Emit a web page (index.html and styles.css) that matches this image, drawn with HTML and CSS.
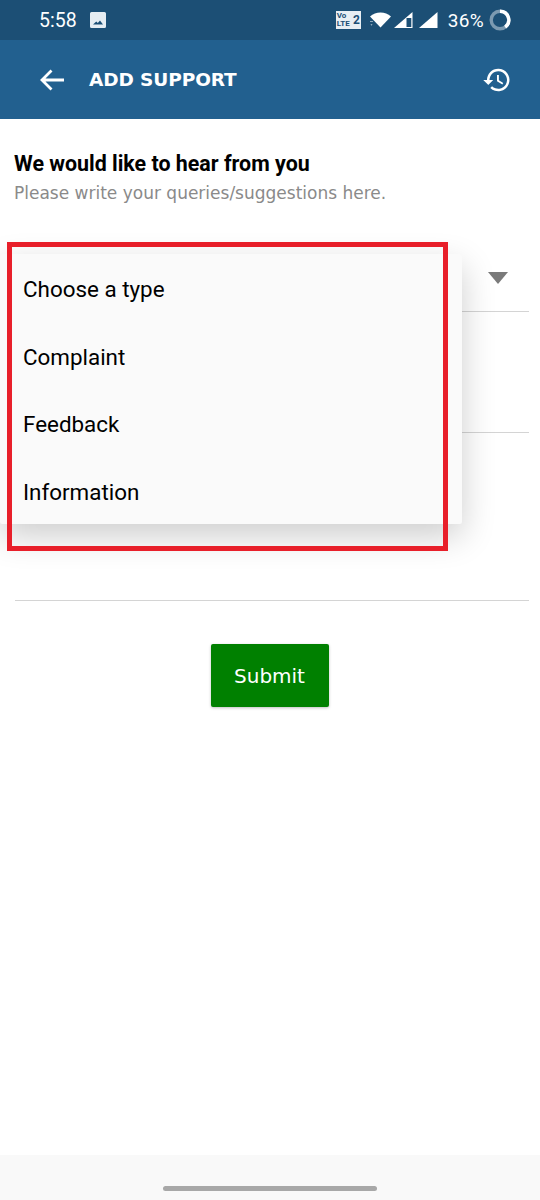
FILE: index.html
```html
<!DOCTYPE html>
<html lang="en">
<head>
  <meta charset="UTF-8" />
  <meta name="viewport" content="width=device-width, initial-scale=1" />
  <title>Add Support</title>
  <link rel="stylesheet" href="styles.css">
</head>
<body>
  <div class="status-bar">
    <span class="time">5:58</span>
    <svg class="gallery-icon" width="16" height="16" viewBox="0 0 16 16">
      <path fill="#e6edf2" fill-rule="evenodd" d="M1.500 0h13A1.500 1.500 0 0 1 16 1.500v13a1.500 1.500 0 0 1-1.500 1.500h-13A1.500 1.500 0 0 1 0 14.500v-13A1.500 1.500 0 0 1 1.500 0zM3 12.500h10L10 8.500l-2.200 2.500-1.500-1.600z"/>
    </svg>
    <div class="status-right">
      <div class="volte"><span class="volte-text">Vo<br>LTE</span><span class="volte-num">2</span></div>
      <svg class="wifi" width="22" height="18" viewBox="0 0 22 18">
        <path fill="#fff" d="M1 5.500C4 2.800 7.500 1.500 11.500 1.500s7.500 1.300 10.500 4l-10.500 11z"/>
        <path fill="#8fa9bd" d="M1 10h3v1H1zM1.500 13h2l-1 2z"/>
      </svg>
      <svg width="19" height="18" viewBox="0 0 19 18">
        <path fill="#fff" d="M0 17L18.500 1v16z"/>
        <path fill="#1c4f75" d="M12.500 7H17.300v9h-4.800z"/>
      </svg>
      <svg class="signal" width="19" height="18" viewBox="0 0 19 18">
        <path fill="#fff" d="M0 17L18.500 1v16z"/>
      </svg>
      <span class="battery-text">36%</span>
      <svg width="22" height="22" viewBox="0 0 22 22">
        <circle cx="11" cy="11" r="8.800" fill="none" stroke="#7c9ab1" stroke-width="3.400"/>
        <path d="M11 2.200A8.800 8.800 0 0 1 16.200 18.100" fill="none" stroke="#fff" stroke-width="3.400"/>
      </svg>
    </div>
  </div>

  <header class="app-bar">
    <svg class="back" width="24" height="24" viewBox="0 0 24 24">
      <path fill="none" stroke="#fff" stroke-width="2.800" d="M24 12H3M11.500 2.500L2 12l9.500 9.500"/>
    </svg>
    <h1>ADD SUPPORT</h1>
    <svg class="history" width="30" height="30" viewBox="0 0 24 24">
      <path fill="#fff" d="M13 3a9 9 0 0 0-9 9H1l3.890 3.890.07.140L9 12H6a7 7 0 1 1 2.050 4.950l-1.420 1.420A9 9 0 1 0 13 3zm-1 5v5l4.280 2.540.72-1.210-3.500-2.080V8z"/>
    </svg>
  </header>

  <main class="content">
    <h2>We would like to hear from you</h2>
    <p class="subtitle">Please write your queries/suggestions here.</p>

    <div class="field field-select">
      <span class="caret"></span>
    </div>
    <div class="field field-subject"></div>
    <div class="field field-message"></div>

    <button class="submit" type="button">Submit</button>

    <ul class="dropdown">
      <li>Choose a type</li>
      <li>Complaint</li>
      <li>Feedback</li>
      <li>Information</li>
    </ul>
    <div class="highlight"></div>
  </main>

  <div class="nav-bar"><span class="nav-pill"></span></div>
</body>
</html>
```

FILE: styles.css
```css
* { box-sizing: border-box; }

html, body { height: 100%; }

body {
  margin: 0;
  width: 540px;
  height: 1200px;
  display: flex;
  flex-direction: column;
  overflow: hidden;
  background: #fff;
  font-family: 'Roboto', sans-serif;
  color: #000;
}

.status-bar {
  height: 40px;
  flex: none;
  display: flex;
  align-items: center;
  padding: 0 29px 0 39px;
  background: #1c4f75;
  color: #fff;
}

.time { font-size: 19.500px; }

.gallery-icon { margin-left: 13px; }

.status-right {
  margin-left: auto;
  display: flex;
  align-items: center;
}

.volte {
  width: 25px;
  height: 18px;
  display: flex;
  align-items: center;
  justify-content: space-between;
  padding: 0 1px;
  margin-right: 8px;
  background: #e8eef3;
  color: #1c4f75;
  font-weight: 700;
}

.volte-text { font-size: 8px; line-height: 8px; }
.volte-num { font-size: 12px; }

.wifi { margin-right: 3px; }
.signal { margin-left: 6px; }

.battery-text {
  margin: 0 5px 0 10px;
  font-size: 19px;
  letter-spacing: 0.300px;
}

.app-bar {
  height: 79px;
  flex: none;
  display: flex;
  align-items: center;
  padding: 0 28px 0 40px;
  background: #22608f;
  color: #fff;
}

.app-bar h1 {
  margin: 0 0 0 25px;
  font-family: 'DejaVu Sans', sans-serif;
  font-size: 18.500px;
  font-weight: 700;
  letter-spacing: -0.100px;
}

.history { margin-left: auto; }

.content {
  flex: 1;
  position: relative;
  padding: 32.500px 11px 0 14px;
}

.content h2 {
  margin: 0;
  font-size: 21.400px;
  line-height: 24px;
  font-weight: 700;
}

.subtitle {
  margin: 7.500px 0 0;
  font-family: 'DejaVu Sans', sans-serif;
  font-size: 17px;
  line-height: 20px;
  color: #8a8a8a;
}

.field {
  margin-left: 1px;
  border-bottom: 1px solid #d4d4d4;
}

.field-select {
  height: 109px;
  position: relative;
}

.field-subject { height: 121px; }
.field-message { height: 168px; margin-right: 0; }

.caret {
  position: absolute;
  top: 69px;
  right: 21px;
  border-left: 10px solid transparent;
  border-right: 10px solid transparent;
  border-top: 12px solid #7a7a7a;
}

.submit {
  display: block;
  width: 118px;
  height: 63px;
  margin: 43px auto 0;
  position: relative;
  left: -2px;
  border: 0;
  border-radius: 2px;
  background: #008000;
  color: #fff;
  font-family: 'DejaVu Sans', sans-serif;
  font-size: 20px;
  font-weight: 400;
  box-shadow: 0 1px 3px rgba(0, 0, 0, 0.25);
}

.dropdown {
  position: absolute;
  top: 135px;
  left: 0;
  width: 462px;
  height: 270px;
  margin: 0;
  padding: 1.500px 0 0 23px;
  list-style: none;
  background: #fafafa;
  border-radius: 2px;
  box-shadow: 0 12px 34px rgba(0, 0, 0, 0.2);
  font-size: 22.400px;
}

.dropdown li {
  height: 67.500px;
  display: flex;
  align-items: center;
}

.highlight {
  position: absolute;
  top: 123px;
  left: 7px;
  width: 441px;
  height: 309px;
  border: 5px solid #e81f2a;
}

.nav-bar {
  height: 45px;
  flex: none;
  display: flex;
  justify-content: center;
  padding-top: 31px;
  background: #f9f9f9;
}

.nav-pill {
  width: 214px;
  height: 5px;
  border-radius: 3px;
  background: #a8a8a8;
}
```
